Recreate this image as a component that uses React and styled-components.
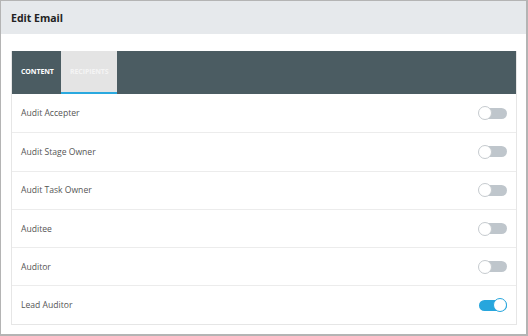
import React from 'react';
import styled, {createGlobalStyle} from 'styled-components';

const Global = createGlobalStyle`
  html, body { margin: 0; padding: 0; background: #fff; }
  body { font-family: "Open Sans", "Liberation Sans", sans-serif; }
  * { box-sizing: border-box; }
`;

const Frame = styled.div`
  width: 528px;
  height: 336px;
  border: 1px solid #b4b4b4;
  border-right-width: 2px;
  border-bottom-width: 2px;
  background: #fff;
  display: flex;
  flex-direction: column;
`;

const Header = styled.div`
  height: 33px;
  background: #e6e9ec;
  display: flex;
  align-items: center;
  padding-left: 10px;
  font-size: 10.5px;
  font-weight: 700;
  color: #222;
`;

const Body = styled.div`
  padding: 17px 9px 0 10px;
`;

const Card = styled.div`
  border: 1px solid #e6e6e6;
  border-top: none;
`;

const TabBar = styled.div`
  height: 43px;
  background: #4b5c62;
  display: flex;
`;

const Tab = styled.div`
  padding: 0 9px;
  display: flex;
  align-items: center;
  font-size: 7px;
  font-weight: 700;
  letter-spacing: -0.1px;
  text-transform: uppercase;
  color: ${p => p.$active ? '#f4f4f4' : '#fff'};
  background: ${p => p.$active ? '#e4e4e4' : 'transparent'};
  border-bottom: 2px solid ${p => p.$active ? '#2aa9df' : 'transparent'};
  width: ${p => p.$w}px;
`;

const Row = styled.div`
  height: 38.3px;
  display: flex;
  align-items: center;
  justify-content: space-between;
  padding: 0 9px 0 9px;
  border-top: ${p => p.$first ? 'none' : '1px solid #ececec'};
  font-size: 8.6px;
  color: #555;
`;

const Track = styled.div`
  position: relative;
  width: 28px;
  height: 11px;
  border-radius: 6px;
  background: ${p => p.$on ? '#27a6dd' : '#bfc6cc'};
`;

const Knob = styled.div`
  position: absolute;
  top: -1.5px;
  left: ${p => p.$on ? '14px' : '-1px'};
  width: 14px;
  height: 14px;
  border-radius: 50%;
  background: #fff;
  border: 1px solid ${p => p.$on ? '#27a6dd' : '#c6cbcf'};
`;

const Toggle = ({on}) => (
  <Track $on={on}><Knob $on={on} /></Track>
);

const rows = [
  {label: 'Audit Accepter', on: false},
  {label: 'Audit Stage Owner', on: false},
  {label: 'Audit Task Owner', on: false},
  {label: 'Auditee', on: false},
  {label: 'Auditor', on: false},
  {label: 'Lead Auditor', on: true},
];

export default function App() {
  return (
    <>
      <Global />
      <Frame>
        <Header>Edit Email</Header>
        <Body>
          <Card>
            <TabBar>
              <Tab $w={49}>Content</Tab>
              <Tab $w={56} $active>Recipients</Tab>
            </TabBar>
            {rows.map((r, i) => (
              <Row key={r.label} $first={i === 0}>
                <span>{r.label}</span>
                <Toggle on={r.on} />
              </Row>
            ))}
          </Card>
        </Body>
      </Frame>
    </>
  );
}
